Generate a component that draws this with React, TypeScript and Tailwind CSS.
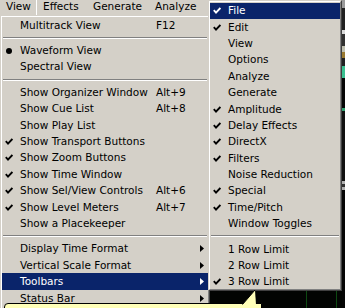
import React from "react";

type Item =
  | "sep"
  | { label: string; sc?: string; mark?: "check" | "bullet"; sub?: boolean; active?: boolean };

const mainItems: Item[] = [
  { label: "Multitrack View", sc: "F12" },
  "sep",
  { label: "Waveform View", mark: "bullet" },
  { label: "Spectral View" },
  "sep",
  { label: "Show Organizer Window", sc: "Alt+9" },
  { label: "Show Cue List", sc: "Alt+8" },
  { label: "Show Play List" },
  { label: "Show Transport Buttons", mark: "check" },
  { label: "Show Zoom Buttons", mark: "check" },
  { label: "Show Time Window", mark: "check" },
  { label: "Show Sel/View Controls", mark: "check", sc: "Alt+6" },
  { label: "Show Level Meters", mark: "check", sc: "Alt+7" },
  { label: "Show a Placekeeper" },
  "sep",
  { label: "Display Time Format", sub: true },
  { label: "Vertical Scale Format", sub: true },
  { label: "Toolbars", sub: true, active: true },
  { label: "Status Bar", sub: true },
];

const subItems: Item[] = [
  { label: "File", mark: "check", active: true },
  { label: "Edit", mark: "check" },
  { label: "View" },
  { label: "Options" },
  { label: "Analyze" },
  { label: "Generate" },
  { label: "Amplitude", mark: "check" },
  { label: "Delay Effects", mark: "check" },
  { label: "DirectX", mark: "check" },
  { label: "Filters", mark: "check" },
  { label: "Noise Reduction" },
  { label: "Special", mark: "check" },
  { label: "Time/Pitch", mark: "check" },
  { label: "Window Toggles" },
  "sep",
  { label: "1 Row Limit" },
  { label: "2 Row Limit" },
  { label: "3 Row Limit", mark: "check" },
];

function Check() {
  return (
    <svg width="8" height="7" viewBox="0 0 8 7" className="block">
      <path d="M0.8 3.2 L3 5.6 L7.4 0.9" stroke="currentColor" strokeWidth="1.9" fill="none" />
    </svg>
  );
}

function Bullet() {
  return <div className="w-[6px] h-[6px] rounded-full bg-black ml-[1px]" />;
}

function Arrow() {
  return (
    <svg width="4" height="7" viewBox="0 0 4 7" className="block">
      <path d="M0 0 L4 3.5 L0 7 Z" fill="currentColor" />
    </svg>
  );
}

function Sep() {
  return (
    <div className="h-[9px] flex items-center px-[1px]">
      <div className="w-full h-[2px] border-t border-t-[#808080] border-b border-b-white" />
    </div>
  );
}

function Row({ it, shortcutCol }: { it: Exclude<Item, "sep">; shortcutCol: boolean }) {
  return (
    <div
      className={
        "flex h-[16.4px] items-center whitespace-nowrap " +
        (it.active ? "bg-[#0a246a] text-white" : "text-black")
      }
    >
      <div className="w-[18px] pl-[3px] flex items-center">
        {it.mark === "check" ? <Check /> : it.mark === "bullet" ? <Bullet /> : null}
      </div>
      <div className={shortcutCol ? "w-[136px]" : "flex-1"}>{it.label}</div>
      {it.sc ? <div>{it.sc}</div> : null}
      {it.sub ? (
        <div className="ml-auto mr-[4px]">
          <Arrow />
        </div>
      ) : null}
    </div>
  );
}

function MenuFrame({ children, className }: { children: React.ReactNode; className?: string }) {
  return (
    <div
      className={
        "bg-[#d4d0c8] border border-t-[#d4d0c8] border-l-[#d4d0c8] border-r-[#404040] border-b-[#404040] " +
        (className ?? "")
      }
    >
      <div className="border border-t-white border-l-white border-r-[#808080] border-b-[#808080] h-full">
        {children}
      </div>
    </div>
  );
}

export default function App() {
  return (
    <div className="relative w-[345px] h-[308px] overflow-hidden bg-[#040704] font-['DejaVu_Sans',sans-serif] text-[10.5px] leading-[13px] select-none">
      <div className="flex h-full">
        <div className="w-[342px] flex flex-col">
          {/* menu bar */}
          <div className="h-[15px] bg-[#d4d0c8] flex items-start text-black shrink-0">
            <div className="w-[37px] h-full pl-[6px] border-r border-r-white leading-[13px]">View</div>
            <div className="w-[50px] pl-[6px] leading-[13px]">Effects</div>
            <div className="w-[62px] pl-[6px] leading-[13px]">Generate</div>
            <div className="flex-1 pl-[6px] leading-[13px]">Analyze</div>
          </div>
          <div className="flex flex-1 min-h-0">
            {/* main dropdown */}
            <MenuFrame className="w-[210px] h-[330px] shrink-0">
              <div className="px-0">
                {mainItems.map((it, i) =>
                  it === "sep" ? <Sep key={i} /> : <Row key={i} it={it} shortcutCol />
                )}
              </div>
            </MenuFrame>
            {/* app canvas behind */}
            <div className="flex-1 flex bg-[#020402]">
              <div className="w-[96px]" />
              <div className="w-[1px] bg-[#0d4a12]" />
              <div className="w-[29px]" />
              <div className="w-[1px] bg-[#0d4a12]" />
            </div>
          </div>
        </div>
        {/* right strip of the app behind */}
        <div className="w-[3px] flex flex-col">
          <div className="h-[8px] bg-[#9a9a9a]" />
          <div className="h-[22px] bg-[#202020]" />
          <div className="h-[4px] bg-[#d8d8d8]" />
          <div className="h-[12px] bg-[#303030]" />
          <div className="h-[6px] bg-[#c0c0b0]" />
          <div className="h-[6px] bg-[#9a7a30]" />
          <div className="h-[8px] bg-[#202020]" />
          <div className="h-[12px] bg-[#3ac090]" />
          <div className="h-[30px] bg-[#050505]" />
          <div className="h-[3px] bg-[#30a070]" />
          <div className="h-[70px] bg-[#101010]" />
          <div className="h-[3px] bg-[#b0b0b0]" />
          <div className="h-[3px] bg-[#303030]" />
          <div className="h-[3px] bg-[#b0b0b0]" />
          <div className="flex-1 bg-[#050505]" />
        </div>
      </div>

      {/* submenu */}
      <MenuFrame className="absolute left-[208px] top-0 w-[134px] h-[291px]">
        <div className="pt-[0.5px] px-0">
          {subItems.map((it, i) =>
            it === "sep" ? <Sep key={i} /> : <Row key={i} it={it} shortcutCol={false} />
          )}
        </div>
      </MenuFrame>

      {/* tooltip balloon */}
      <div className="absolute z-10 left-[4px] top-[303px] w-[258px] h-[12px] bg-[#ffffb8] border border-black rounded-tl-[4px]" />
      <svg
        className="absolute z-20 block left-[240px] top-[289px] w-[18px] h-[16px]"
        viewBox="0 0 18 16"
      >
        <polygon points="15,1 2,16 16,16" fill="#ffffb8" />
        <line x1="15" y1="1" x2="2.5" y2="15.5" stroke="#000" strokeWidth="1" />
      </svg>
    </div>
  );
}
